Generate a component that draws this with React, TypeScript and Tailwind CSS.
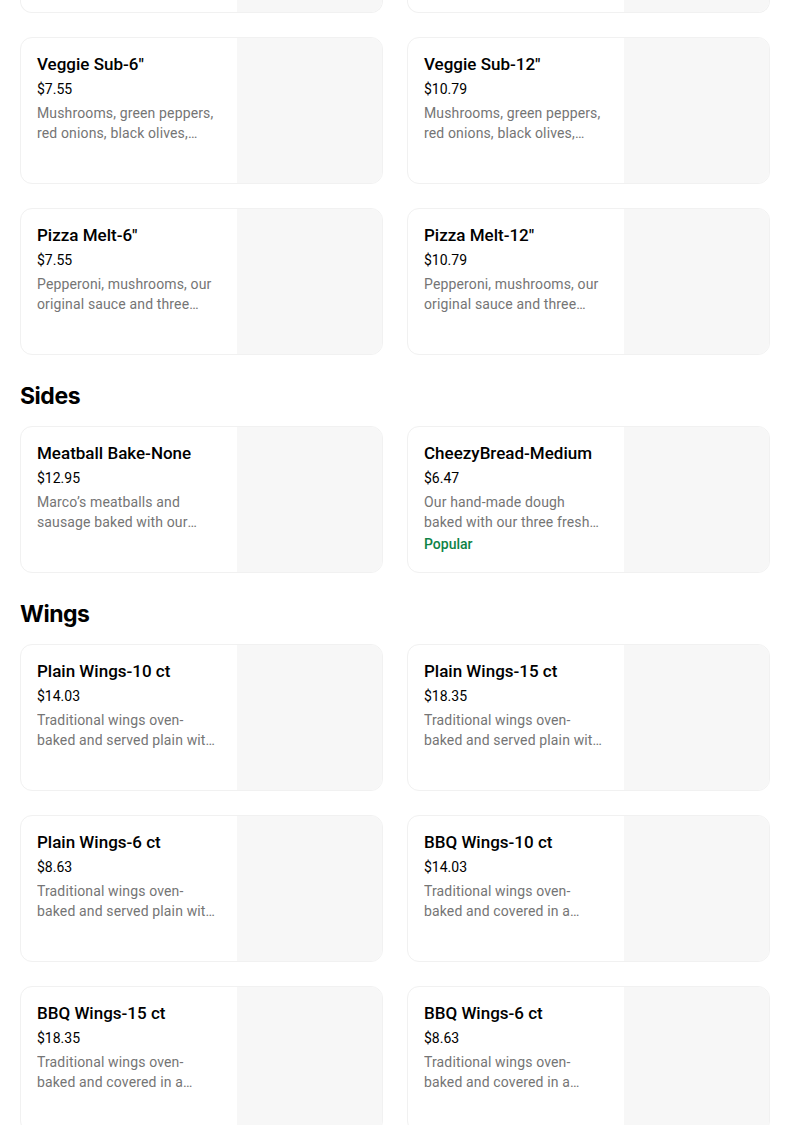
type MenuItem = {
  name: string;
  price: string;
  description: string;
  popular?: boolean;
};

type Section = {
  title?: string;
  items: MenuItem[];
};

const sections: Section[] = [
  {
    items: [
      {
        name: "Veggie Sub-6\"",
        price: "$7.55",
        description: "Mushrooms, green peppers, red onions, black olives, tomatoes and cheese",
      },
      {
        name: "Veggie Sub-12\"",
        price: "$10.79",
        description: "Mushrooms, green peppers, red onions, black olives, tomatoes and cheese",
      },
      {
        name: "Pizza Melt-6\"",
        price: "$7.55",
        description: "Pepperoni, mushrooms, our original sauce and three cheeses",
      },
      {
        name: "Pizza Melt-12\"",
        price: "$10.79",
        description: "Pepperoni, mushrooms, our original sauce and three cheeses",
      },
    ],
  },
  {
    title: "Sides",
    items: [
      {
        name: "Meatball Bake-None",
        price: "$12.95",
        description: "Marco\u2019s meatballs and sausage baked with our original sauce",
      },
      {
        name: "CheezyBread-Medium",
        price: "$6.47",
        description: "Our hand-made dough baked with our three fresh cheeses",
        popular: true,
      },
    ],
  },
  {
    title: "Wings",
    items: [
      {
        name: "Plain Wings-10 ct",
        price: "$14.03",
        description: "Traditional wings oven-baked and served plain with your choice of dip",
      },
      {
        name: "Plain Wings-15 ct",
        price: "$18.35",
        description: "Traditional wings oven-baked and served plain with your choice of dip",
      },
      {
        name: "Plain Wings-6 ct",
        price: "$8.63",
        description: "Traditional wings oven-baked and served plain with your choice of dip",
      },
      {
        name: "BBQ Wings-10 ct",
        price: "$14.03",
        description: "Traditional wings oven-baked and covered in a sweet BBQ sauce",
      },
      {
        name: "BBQ Wings-15 ct",
        price: "$18.35",
        description: "Traditional wings oven-baked and covered in a sweet BBQ sauce",
      },
      {
        name: "BBQ Wings-6 ct",
        price: "$8.63",
        description: "Traditional wings oven-baked and covered in a sweet BBQ sauce",
      },
    ],
  },
];

// shell of a card scrolled past the top edge, only its bottom shows
function CutOffCard() {
  return (
    <div className="flex h-[13px] overflow-hidden rounded-b-xl border border-t-0 border-[#f1f1f1] bg-white">
      <div className="w-[216px] shrink-0" />
      <div className="flex-1 bg-[#f7f7f7]" />
    </div>
  );
}

function ItemCard({ item }: { item: MenuItem }) {
  return (
    <div className="flex h-[147px] overflow-hidden rounded-xl border border-[#f1f1f1] bg-white">
      <div className="w-[216px] shrink-0 px-4 pt-4">
        <div className="flex w-[180px] flex-col">
          <h3 className="text-[17px] leading-5 font-medium text-black">{item.name}</h3>
          <p className="mt-[5px] text-[14px] leading-5 text-black">{item.price}</p>
          <p className="mt-1 line-clamp-2 text-[14px] leading-5 tracking-[0.01em] text-[#757575]">
            {item.description}
          </p>
          {item.popular && (
            <p className="mt-0.5 text-[14px] leading-5 font-medium text-[#0e8345]">Popular</p>
          )}
        </div>
      </div>
      <div className="flex-1 bg-[#f7f7f7]" />
    </div>
  );
}

export default function App() {
  return (
    <div className="min-h-screen overflow-hidden bg-white font-['Roboto',sans-serif]">
      <div className="ml-5 w-[750px]">
        <div className="grid grid-cols-2 gap-6">
          <CutOffCard />
          <CutOffCard />
        </div>
        <div className="mt-6">
          {sections.map((section, i) => (
            <section key={i}>
              {section.title && (
                <h2 className="pt-[25px] pb-[14px] font-['Inter',sans-serif] text-[23px] leading-8 font-bold tracking-[-0.02em] text-black">
                  {section.title}
                </h2>
              )}
              <div className="grid grid-cols-2 gap-6">
                {section.items.map((item) => (
                  <ItemCard key={item.name} item={item} />
                ))}
              </div>
            </section>
          ))}
        </div>
      </div>
    </div>
  );
}
